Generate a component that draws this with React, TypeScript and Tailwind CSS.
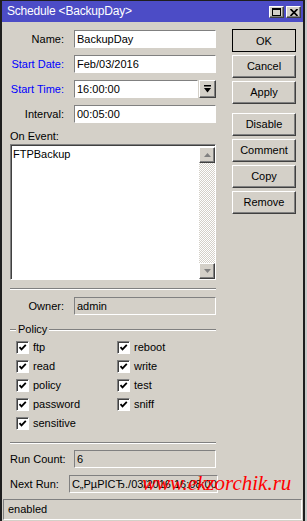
import React from 'react';

const raised =
  'border border-t-white border-l-white border-b-[#404040] border-r-[#404040] shadow-[inset_-1px_-1px_0_#808080]';
const sunken =
  'border border-t-[#808080] border-l-[#808080] border-b-white border-r-white';

const Field = ({
  label,
  value,
  blue,
  readOnly,
  dropdown,
}: {
  label: string;
  value: string;
  blue?: boolean;
  readOnly?: boolean;
  dropdown?: boolean;
}) => (
  <div className="flex items-center h-[18px]">
    <div className={`w-[54px] text-right whitespace-nowrap ${blue ? 'text-[#0000ff]' : 'text-black'}`}>{label}</div>
    <div className="flex flex-1 ml-[10px] h-full gap-[1px]">
      <div
        className={`flex-1 h-full flex items-center pl-[2px] whitespace-nowrap overflow-hidden ${sunken} ${
          readOnly ? 'bg-[#d4d0c8]' : 'bg-white'
        }`}
      >
        {value}
      </div>
      {dropdown && (
        <div className={`w-[17px] h-full bg-[#d4d0c8] flex items-center justify-center ${raised}`}>
          <svg width="7" height="8" viewBox="0 0 7 8">
            <rect x="0" y="0" width="7" height="1.5" fill="#000" />
            <polygon points="0,3 7,3 3.5,7.5" fill="#000" />
          </svg>
        </div>
      )}
    </div>
  </div>
);

const Check = ({ label }: { label: string }) => (
  <div className="flex items-center h-[13px] gap-[4px]">
    <div className={`w-[13px] h-[13px] bg-white flex items-center justify-center ${sunken} shadow-[inset_1px_1px_0_#404040]`}>
      <svg width="9" height="9" viewBox="0 0 9 9">
        <path d="M1.5 4.2 L3.5 6.4 L7.8 1.8" fill="none" stroke="#000" strokeWidth="1.8" />
      </svg>
    </div>
    <span>{label}</span>
  </div>
);

const Btn = ({ label, isDefault }: { label: string; isDefault?: boolean }) => (
  <div
    className={`h-[23px] flex items-center justify-center bg-[#d4d0c8] ${
      isDefault ? 'outline outline-1 outline-black -outline-offset-1 border border-t-white border-l-white border-b-[#404040] border-r-[#404040] p-0' : raised
    }`}
  >
    <span className={isDefault ? 'mt-[1px]' : ''}>{label}</span>
  </div>
);

const Etched = ({ className = '' }: { className?: string }) => (
  <div className={`h-[2px] border-t border-t-[#808080] border-b border-b-white ${className}`} />
);

export default function App() {
  return (
    <div className="w-[307px] h-[521px] bg-[#c8c8c8] flex overflow-hidden relative font-['Liberation_Sans',Arial,sans-serif] text-[11px] text-black leading-[13px]">
      <div className="w-[305px] h-full bg-[#d4d0c8] border-l-2 border-l-[#1e1e1e] border-r-2 border-r-[#1e1e1e] border-t border-t-[#1e1e1e] flex flex-col">
        {/* title bar */}
        <div className="h-[21px] bg-[#4c4cc6] flex items-center justify-between pl-[5px] pr-[2px]">
          <span className="text-white text-[12px] tracking-[-0.2px]">Schedule &lt;BackupDay&gt;</span>
          <div className="flex gap-[2px] mt-[1px]">
            <div className={`w-[15px] h-[12px] bg-[#d4d0c8] flex items-center justify-center ${raised}`}>
              <svg width="9" height="8" viewBox="0 0 9 8">
                <rect x="0.5" y="0.5" width="8" height="7" fill="none" stroke="#000" />
                <rect x="0" y="0" width="9" height="2" fill="#000" />
              </svg>
            </div>
            <div className={`w-[15px] h-[12px] bg-[#d4d0c8] flex items-center justify-center ${raised}`}>
              <svg width="8" height="7" viewBox="0 0 8 7">
                <path d="M0.5 0 L7.5 7 M7.5 0 L0.5 7" stroke="#000" strokeWidth="1.7" />
              </svg>
            </div>
          </div>
        </div>

        {/* body */}
        <div className="flex pl-[8px] pt-[8px]">
          <div className="w-[206px] flex flex-col">
            <div className="flex flex-col gap-[7px]">
              <Field label="Name:" value="BackupDay" />
              <Field label="Start Date:" value="Feb/03/2016" blue />
              <Field label="Start Time:" value="16:00:00" blue dropdown />
              <Field label="Interval:" value="00:05:00" />
            </div>
            <div className="mt-[7px] h-[13px]">On Event:</div>
            <div className="mt-[1px] h-[136px] flex bg-white border border-t-[#808080] border-l-[#808080] border-b-white border-r-white shadow-[inset_1px_1px_0_#404040]">
              <div className="flex-1 pl-[2px] pt-[3px]">FTPBackup</div>
              <div className="w-[16px] flex flex-col mt-[2px] mb-[0px] bg-[repeating-conic-gradient(#d4d0c8_0_25%,#ffffff_0_50%)] bg-[length:2px_2px]">
                <div className={`h-[16px] bg-[#d4d0c8] flex items-center justify-center ${raised}`}>
                  <svg width="7" height="4" viewBox="0 0 7 4">
                    <polygon points="3.5,0 7,4 0,4" fill="#808080" />
                  </svg>
                </div>
                <div className="flex-1" />
                <div className={`h-[16px] bg-[#d4d0c8] flex items-center justify-center ${raised}`}>
                  <svg width="7" height="4" viewBox="0 0 7 4">
                    <polygon points="0,0 7,0 3.5,4" fill="#808080" />
                  </svg>
                </div>
              </div>
            </div>

            <Etched className="mt-[8px]" />
            <div className="mt-[7px]">
              <Field label="Owner:" value="admin" readOnly />
            </div>

            {/* policy group */}
            <div className="mt-[8px] flex items-center h-[13px]">
              <div className="w-[6px] h-[2px] border-t border-t-[#808080] border-b border-b-white" />
              <span className="px-[2px]">Policy</span>
              <div className="flex-1 h-[2px] border-t border-t-[#808080] border-b border-b-white" />
            </div>
            <div className="mt-[5px] pl-[6px] grid grid-cols-[101px_1fr] gap-y-[6px]">
              <Check label="ftp" />
              <Check label="reboot" />
              <Check label="read" />
              <Check label="write" />
              <Check label="policy" />
              <Check label="test" />
              <Check label="password" />
              <Check label="sniff" />
              <Check label="sensitive" />
            </div>

            <Etched className="mt-[12px]" />
            <div className="mt-[6px] flex flex-col gap-[7px]">
              <Field label="Run Count:" value="6" readOnly />
              <Field label="Next Run:" value="С„РµРІСЂ./03/2016 16:08:00" readOnly />
            </div>
          </div>

          <div className="ml-[16px] w-[64px] flex flex-col -mt-[1px]">
            <div className="flex flex-col gap-[3px]">
              <Btn label="OK" isDefault />
              <Btn label="Cancel" />
              <Btn label="Apply" />
            </div>
            <div className="mt-[9px] flex flex-col gap-[3px]">
              <Btn label="Disable" />
              <Btn label="Comment" />
              <Btn label="Copy" />
              <Btn label="Remove" />
            </div>
          </div>
        </div>

        {/* status bar */}
        <div className={`mt-auto mb-[1px] mx-[1px] h-[21px] flex items-center pl-[4px] ${sunken}`}>enabled</div>
      </div>

      {/* watermark */}
      <div className="absolute left-[142px] top-[471px] text-[21px] leading-[24px] italic text-[#ff0000] font-['Liberation_Serif',serif] pointer-events-none">
        www.ekzorchik.ru
      </div>
    </div>
  );
}
